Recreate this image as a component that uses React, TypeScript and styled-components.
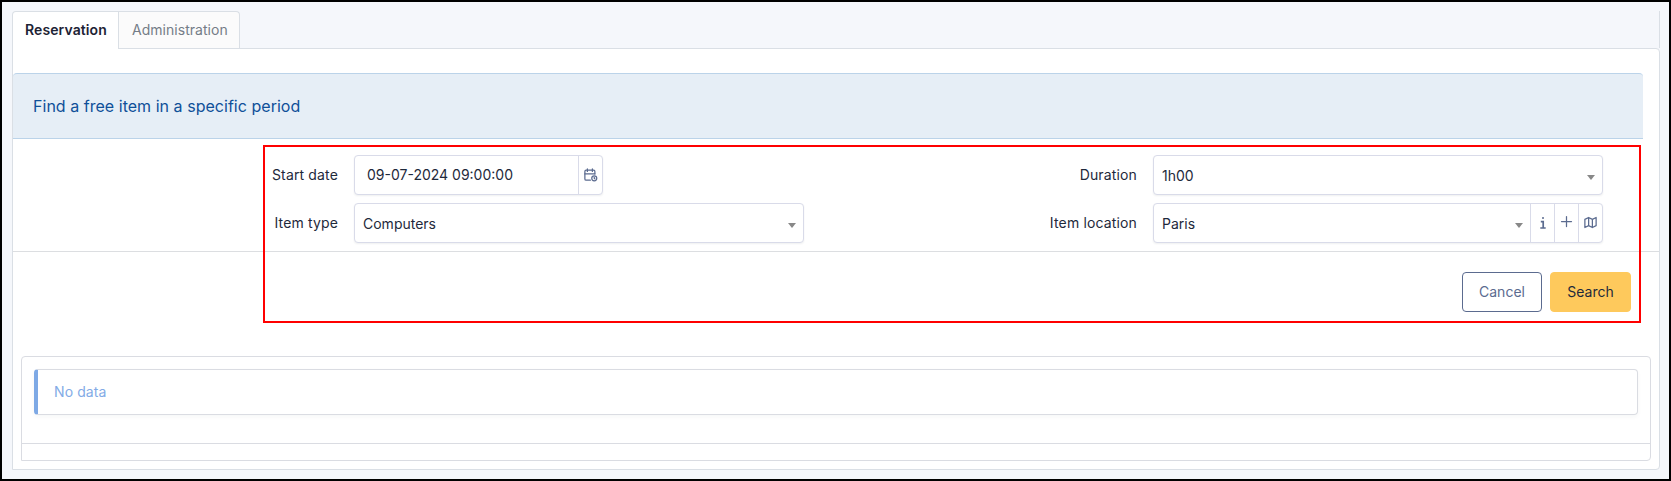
import React from "react";
import styled, { createGlobalStyle } from "styled-components";

const line = "#dadfe5";
const fieldLine = "#d9dbe9";

const GlobalStyle = createGlobalStyle`
  * { box-sizing: border-box; }
  body {
    margin: 0;
    font-family: Inter, "Liberation Sans", sans-serif;
    font-size: 14px;
    line-height: 20px;
    color: #1e293b;
  }
`;

const Page = styled.div`
  position: relative;
  height: 481px;
  border: 2px solid #000;
  background: #f5f7fb;
  padding: 9px 9px 9px 10px;
  display: flex;
  flex-direction: column;
`;

const TabBar = styled.div`
  display: flex;
  height: 37px;
  border-right: 1px solid ${line};
`;

const Tab = styled.div<{ $active?: boolean }>`
  height: ${(p) => (p.$active ? 38 : 37)}px;
  width: ${(p) => (p.$active ? 107 : 121)}px;
  padding-left: ${(p) => (p.$active ? 12 : 13)}px;
  line-height: 35px;
  letter-spacing: ${(p) => (p.$active ? "0.1px" : "0.03px")};
  font-weight: ${(p) => (p.$active ? 600 : 400)};
  color: ${(p) => (p.$active ? "#1d2335" : "#757d87")};
  background: ${(p) => (p.$active ? "#fff" : "#fbfbfb")};
  border: 1px solid ${line};
  border-bottom: 0;
  border-left-width: ${(p) => (p.$active ? 1 : 0)}px;
  border-radius: ${(p) => (p.$active ? "4px 0 0 0" : "0 4px 0 0")};
  z-index: ${(p) => (p.$active ? 1 : 0)};
`;

const Panel = styled.div`
  flex: 1;
  display: flex;
  flex-direction: column;
  background: #fff;
  border: 1px solid ${line};
  border-radius: 0 4px 4px 0;
  padding-top: 24px;
`;

const Heading = styled.div`
  height: 66px;
  margin-right: 16px;
  padding-left: 20px;
  font-size: 16px;
  line-height: 65px;
  letter-spacing: 0.03px;
  color: #0f5099;
  background: #e6eef6;
  border-top: 1px solid #bbd3e9;
  border-bottom: 1px solid #bbd3e9;
  border-radius: 4px 4px 0 0;
`;

const Form = styled.div`
  height: 113px;
  padding: 16px 0 0 241px;
  display: grid;
  grid-template-columns: 100px 450px 349px 450px;
  grid-template-rows: 40px 40px;
  row-gap: 8px;
  border-bottom: 1px solid #dcdee1;
`;

const Label = styled.div`
  padding-right: 16px;
  text-align: right;
  line-height: 40px;
  letter-spacing: 0.15px;
`;

const Group = styled.div<{ $width: number }>`
  width: ${(p) => p.$width}px;
  height: 40px;
  display: flex;
  background: #fff;
  border: 1px solid ${fieldLine};
  border-radius: 4px;
  box-shadow: 0 1px 2px rgba(30, 41, 59, 0.07);
`;

const Value = styled.div<{ $indent: number; $drop?: number }>`
  flex: 1;
  padding-left: ${(p) => p.$indent}px;
  line-height: ${(p) => 38 + (p.$drop ?? 0)}px;
`;

const Caret = styled.div`
  width: 0;
  height: 0;
  margin: 19px 7px 0 0;
  border: 4px solid transparent;
  border-top: 5px solid #888;
  border-bottom: 0;
`;

const AddOn = styled.div<{ $lift?: number }>`
  width: 24px;
  padding-bottom: ${(p) => p.$lift ?? 1}px;
  display: flex;
  align-items: center;
  justify-content: center;
  color: #5b6b8f;
  border-left: 1px solid ${fieldLine};
`;

const Actions = styled.div`
  display: flex;
  justify-content: flex-end;
  gap: 8px;
  padding: 20px 28px 0 0;
`;

const Button = styled.button<{ $primary?: boolean }>`
  width: ${(p) => (p.$primary ? 81 : 80)}px;
  height: 40px;
  padding: 0;
  font: inherit;
  color: ${(p) => (p.$primary ? "#1e293b" : "#5b6b8f")};
  background: ${(p) => (p.$primary ? "#fec95c" : "#fff")};
  border: 1px solid ${(p) => (p.$primary ? "#fec95c" : "#5b6b8f")};
  border-radius: 4px;
`;

const Card = styled.div`
  height: 105px;
  margin: 44px 8px 0;
  padding: 12px 12px 0;
  border: 1px solid #dadce2;
  border-radius: 4px 4px 4px 0;
`;

const Notice = styled.div`
  height: 46px;
  padding-left: 16px;
  line-height: 44px;
  letter-spacing: 0.1px;
  color: #83abe6;
  border: 1px solid #dadce2;
  border-left: 4px solid #7ea9e5;
  border-radius: 4px;
  box-shadow: 0 2px 4px rgba(30, 41, 59, 0.04);
`;

const CardFooter = styled.div`
  height: 17px;
  margin: 28px -12px 0;
  border-top: 1px solid #dadce2;
`;

const Highlight = styled.div`
  position: absolute;
  left: 261px;
  top: 143px;
  width: 1378px;
  height: 178px;
  border: 2px solid #f00;
  pointer-events: none;
`;

const Icon = ({ size = 15, children }: { size?: number; children: React.ReactNode }) => (
  <svg width={size} height={size} viewBox="0 0 24 24" fill="none" stroke="currentColor" strokeWidth="2" strokeLinecap="round" strokeLinejoin="round">
    {children}
  </svg>
);

export default function App() {
  return (
    <>
      <GlobalStyle />
      <Page>
        <TabBar>
          <Tab $active>Reservation</Tab>
          <Tab>Administration</Tab>
        </TabBar>
        <Panel>
          <Heading>Find a free item in a specific period</Heading>
          <Form>
            <Label>Start date</Label>
            <Group $width={249}>
              <Value $indent={12}>09-07-2024 09:00:00</Value>
              <AddOn>
                <Icon>
                  <path d="M11.8 21H5a2 2 0 0 1-2-2V7a2 2 0 0 1 2-2h12a2 2 0 0 1 2 2v4" />
                  <circle cx="18" cy="18" r="4" />
                  <path d="M15 3v4M7 3v4M3 11h16M18 16.5V18l1 1" />
                </Icon>
              </AddOn>
            </Group>
            <Label>Duration</Label>
            <Group $width={450}>
              <Value $indent={8} $drop={2}>1h00</Value>
              <Caret />
            </Group>
            <Label>Item type</Label>
            <Group $width={450}>
              <Value $indent={8} $drop={2}>Computers</Value>
              <Caret />
            </Group>
            <Label>Item location</Label>
            <Group $width={450}>
              <Value $indent={8} $drop={2}>Paris</Value>
              <Caret />
              <AddOn>
                <svg width="6" height="12" viewBox="0 0 6 12" fill="none" stroke="currentColor" strokeWidth="1.7">
                  <path d="M2 1h2M0.8 4.6h2.4v6M0.3 11h5.4" />
                </svg>
              </AddOn>
              <AddOn $lift={4}>
                <Icon>
                  <path d="M12 4v16M4 12h16" />
                </Icon>
              </AddOn>
              <AddOn>
                <Icon>
                  <path d="M3 7l6-3 6 3 6-3v13l-6 3-6-3-6 3V7M9 4v13M15 7v13" />
                </Icon>
              </AddOn>
            </Group>
          </Form>
          <Actions>
            <Button>Cancel</Button>
            <Button $primary>Search</Button>
          </Actions>
          <Card>
            <Notice>No data</Notice>
            <CardFooter />
          </Card>
        </Panel>
        <Highlight />
      </Page>
    </>
  );
}
